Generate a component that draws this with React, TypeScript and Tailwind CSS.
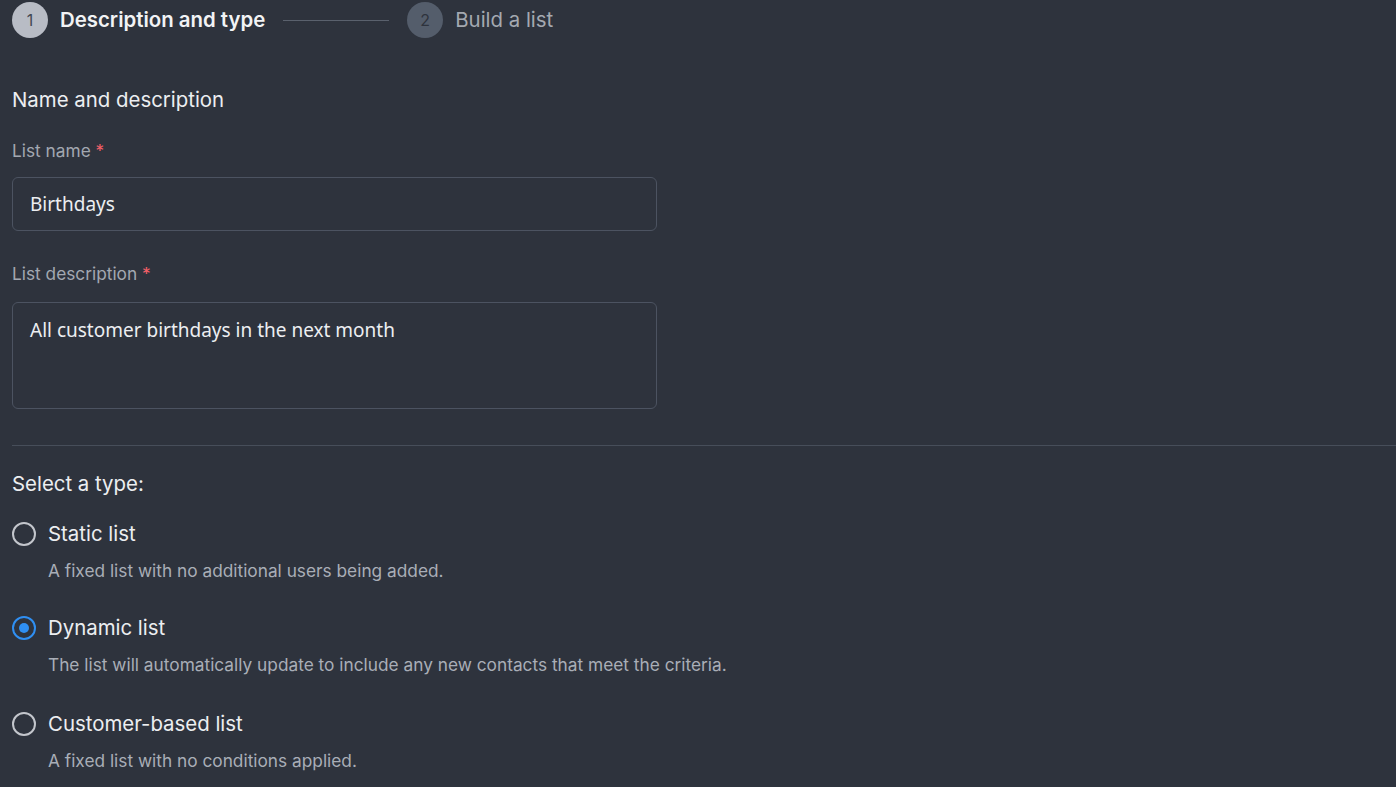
import React from "react";

function Radio({ checked }: { checked?: boolean }) {
  return checked ? (
    <span className="flex h-6 w-6 shrink-0 items-center justify-center rounded-full border-[2.5px] border-[#2f8ff2]">
      <span className="h-[10px] w-[10px] rounded-full bg-[#2f8ff2]" />
    </span>
  ) : (
    <span className="h-6 w-6 shrink-0 rounded-full border-[2.5px] border-[#c3c6cc]" />
  );
}

function Option({ label, desc, checked, mt }: { label: string; desc: string; checked?: boolean; mt: string }) {
  return (
    <div className={mt}>
      <div className="flex h-7 items-center gap-3">
        <Radio checked={checked} />
        <span className="text-[20.4px] leading-7 text-[#eceef1]">{label}</span>
      </div>
      <div className="mt-[11px] pl-9 text-[17.3px] leading-6 text-[#a9aeb7]">{desc}</div>
    </div>
  );
}

export default function App() {
  return (
    <div
      className="min-h-screen bg-[#2e333d] pl-3 text-[#eceef1]"
      style={{ fontFamily: "Inter, 'Noto Sans', sans-serif" }}
    >
      <div className="flex h-10 items-center">
        <span className="flex h-9 w-9 items-center justify-center rounded-full bg-[#b8bcc5] text-[16px] text-[#424853]">1</span>
        <span className="ml-3 text-[20.4px] font-semibold text-[#f2f3f5]">Description and type</span>
        <span className="ml-[18px] h-px w-[106px] bg-[#5a616d]" />
        <span className="ml-[18px] flex h-9 w-9 items-center justify-center rounded-full bg-[#545d6b] text-[16px] text-[#2e333d]">2</span>
        <span className="ml-3 text-[20.4px] text-[#a4a9b1]">Build a list</span>
      </div>

      <div className="mt-[46px] text-[20.4px] leading-7 text-[#eceef1]">Name and description</div>

      <div className="mt-[25px] text-[17.3px] leading-6 text-[#a3a8b1]">
        List name <span className="text-[#f25f67]">*</span>
      </div>
      <div
        className="mt-[14px] flex h-[54px] w-[645px] items-center rounded-[6px] border border-[#4c5361] px-[17px] text-[19px] text-[#eceef1]"
        style={{ fontFamily: "'Noto Sans', sans-serif" }}
      >
        Birthdays
      </div>

      <div className="mt-[31px] text-[17.3px] leading-6 text-[#a3a8b1]">
        List description <span className="text-[#f25f67]">*</span>
      </div>
      <div
        className="mt-4 h-[107px] w-[645px] rounded-[6px] border border-[#4c5361] px-[17px] pt-[14px] text-[19px] leading-[26px] text-[#eceef1]"
        style={{ fontFamily: "'Noto Sans', sans-serif" }}
      >
        All customer birthdays in the next month
      </div>

      <div className="mt-9 h-px bg-[#474e5a]" />

      <div className="mt-[24px] text-[20.4px] leading-7 text-[#eceef1]">Select a type:</div>

      <Option mt="mt-[22px]" label="Static list" desc="A fixed list with no additional users being added." />
      <Option
        mt="mt-[31px]"
        checked
        label="Dynamic list"
        desc="The list will automatically update to include any new contacts that meet the criteria."
      />
      <Option mt="mt-[33px]" label="Customer-based list" desc="A fixed list with no conditions applied." />
    </div>
  );
}
